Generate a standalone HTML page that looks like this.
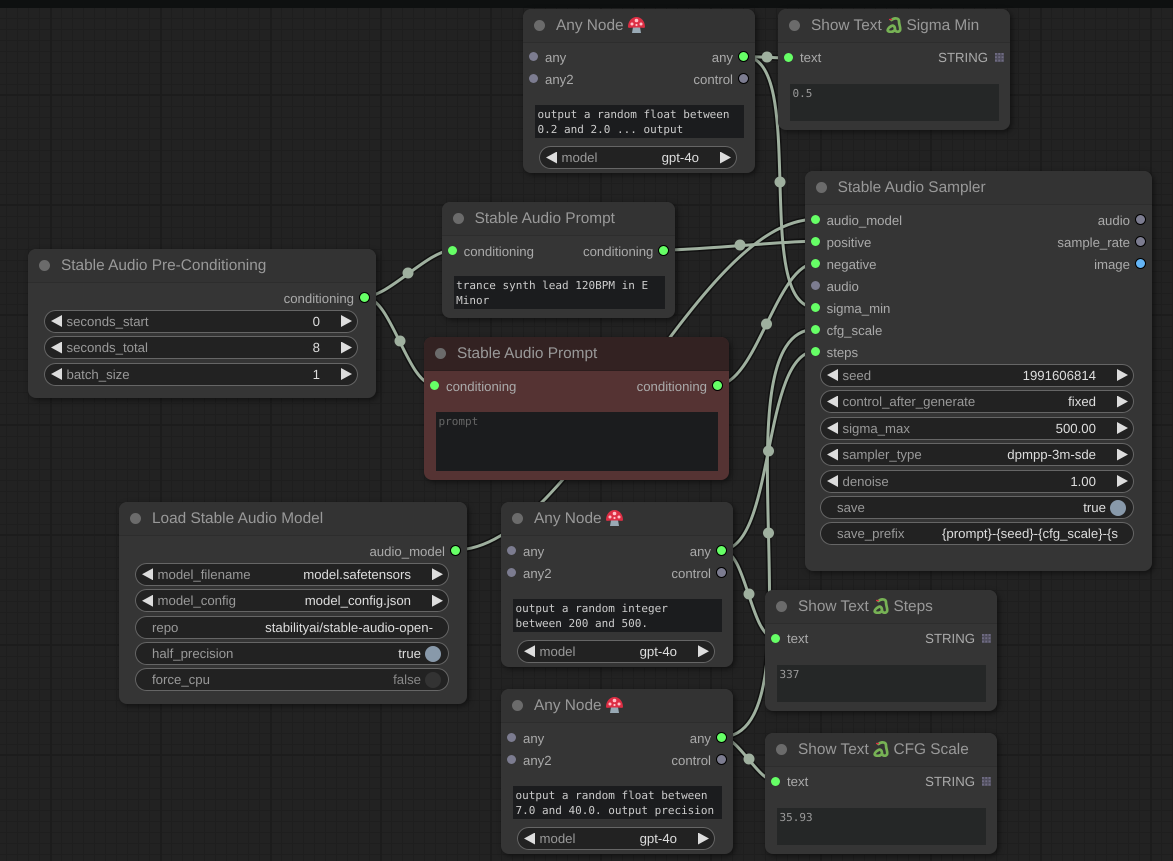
<!DOCTYPE html>
<html><head><meta charset="utf-8"><style>
html,body{margin:0;padding:0;background:#222}
#c{position:relative;width:1173px;height:861px;overflow:hidden;font-family:"Liberation Sans",sans-serif;background-color:#222;text-rendering:geometricPrecision}
#g{position:absolute;inset:0;
background-image:linear-gradient(to right,#1c1c1c 2px,transparent 2px),linear-gradient(to bottom,#1c1c1c 2px,transparent 2px),linear-gradient(to right,#1e1e1e 1px,transparent 1px),linear-gradient(to bottom,#1e1e1e 1px,transparent 1px);
background-size:110px 110px,110px 110px,11px 11px,11px 11px;background-position:50px 0,0 94px,6px 0,0 7px}
#top{position:absolute;left:0;top:0;width:1173px;height:8px;background:#0e1010}
svg.l{position:absolute;left:0;top:0}
.n{position:absolute;background:#353535;border-radius:8px;box-shadow:2px 2px 6px rgba(0,0,0,.5)}
.h{position:absolute;left:0;right:0;top:0;height:33px;background:#333;border-radius:8px 8px 0 0;border-bottom:1px solid #2d2d2d;box-sizing:content-box}
.h i{position:absolute;left:11px;top:11px;width:11px;height:11px;border-radius:50%;background:#6b6b6b}
.h span{position:absolute;left:33px;top:0;line-height:34px;font-size:15.4px;color:#999;white-space:nowrap}
.red{background:#533}
.red .h{background:#322;border-bottom-color:#2c1d1d}
.r{position:absolute;left:0;right:0;height:22px;line-height:23px;font-size:13.2px;color:#aaa;white-space:nowrap}
.r b{position:absolute;width:9px;height:9px;border-radius:50%;top:5.5px}
.r b.L{left:6px}.r b.R{right:7px;box-shadow:0 0 0 1px #000}
.r span.L{position:absolute;left:22px}.r span.R{position:absolute;right:22px}
.r.st{top:38px;line-height:22px}.r.st b{top:6px}
.G{background:#6f6}.S{background:#7c7c90}.B{background:#64b5f6}
.w{position:absolute;left:16px;right:18px;height:23px;background:#222;border-radius:12px;box-shadow:inset 0 0 0 1px #666;font-size:13.2px;line-height:23px;color:#999;white-space:nowrap}
.w.a::before,.w.a::after{content:"";position:absolute;top:5.5px;width:11px;height:12px;background:#ddd}
.w.a::before{left:7px;clip-path:polygon(100% 0,100% 100%,0 50%)}
.w.a::after{right:6px;clip-path:polygon(0 0,0 100%,100% 50%)}
.w .k{position:absolute;left:17px}.w.a .k{left:22.5px}
.w .v{position:absolute;right:16px;color:#ddd}.w.a .v{right:38px}.w.t .v{right:28px}
.w u{position:absolute;right:8px;top:3.5px;width:16px;height:16px;border-radius:50%;background:#89a}
.w.f .v{color:#888}.w.f u{background:#333}
.ta{position:absolute;left:12px;width:209px;height:33px;box-sizing:border-box;background:#1b1c1e;color:#ccc;font:11px/15px "DejaVu Sans Mono",monospace;padding:2px 2.5px;white-space:pre;overflow:hidden}
.sh{background:#252727;color:#999;height:37px}
.gr{position:absolute;right:6px;top:5.5px;width:9px;height:9px;background-color:#6f6c82;background-image:linear-gradient(to right,transparent 2px,#4f4d5c 2px,#4f4d5c 3px),linear-gradient(to bottom,transparent 2px,#4f4d5c 2px,#4f4d5c 3px);background-size:3.3px 3.3px}
svg.e{position:absolute}
</style></head><body><div id="c"><div id="g"></div><div id="top"></div>

<svg class="l" width="1173" height="861" fill="none">
<g stroke="#000" stroke-opacity=".5" stroke-width="6">
<path d="M744 56.5C755 56.5 778 58 789 58"/><path d="M744 56.5C809 56.5 751 307.5 815.7 307.5"/><path d="M364 297C389 297 428 250 453 250"/><path d="M364 297C392 297 407 385.3 435 385.3"/><path d="M664 250C702 250 778 241.3 815.7 241.3"/><path d="M717 385C756 385 777 263.3 815.7 263.3"/><path d="M455 550C577 550 694 219.3 815.7 219.3"/><path d="M721 550C747 550 750 638.5 776 638.5"/><path d="M721 550C776 550 761 351.3 815.7 351.3"/><path d="M721 737C826 737 711 329.3 815.7 329.3"/><path d="M721 737C739 737 758 781.5 776 781.5"/>
</g>
<g stroke="#9fb09f" stroke-width="3">
<path d="M744 56.5C755 56.5 778 58 789 58"/><path d="M744 56.5C809 56.5 751 307.5 815.7 307.5"/><path d="M364 297C389 297 428 250 453 250"/><path d="M364 297C392 297 407 385.3 435 385.3"/><path d="M664 250C702 250 778 241.3 815.7 241.3"/><path d="M717 385C756 385 777 263.3 815.7 263.3"/><path d="M455 550C577 550 694 219.3 815.7 219.3"/><path d="M721 550C747 550 750 638.5 776 638.5"/><path d="M721 550C776 550 761 351.3 815.7 351.3"/><path d="M721 737C826 737 711 329.3 815.7 329.3"/><path d="M721 737C739 737 758 781.5 776 781.5"/>
</g>
<g fill="#9fb09f"><circle cx="767" cy="57" r="5.5"/><circle cx="780" cy="182" r="5.5"/><circle cx="408" cy="273" r="5.5"/><circle cx="400" cy="341" r="5.5"/><circle cx="740" cy="245" r="5.5"/><circle cx="766.500" cy="324" r="5.5"/><circle cx="749" cy="594" r="5.5"/><circle cx="768.500" cy="451" r="5.5"/><circle cx="768.500" cy="533" r="5.5"/><circle cx="749" cy="759" r="5.5"/></g>
</svg>

<!-- Any Node 1 -->
<div class="n" style="left:523px;top:9px;width:232px;height:164px">
<div class="h"><i></i><span>Any Node</span></div>
<svg class="e" style="left:104.500px;top:7.500px" width="17" height="16" viewBox="0 0 17 16"><path d="M5 10h7l1 6H4z" fill="#99aab5"/><path d="M0 10C0 4 4 0 8.500 0S17 4 17 10C17 11.500 14 10.500 8.500 10.500S0 11.500 0 10z" fill="#dd2e44"/><g fill="#ffc0c8"><circle cx="8.500" cy="3.500" r="1.800"/><circle cx="4" cy="7" r="1.500"/><circle cx="13" cy="7" r="1.500"/><circle cx="8.500" cy="8" r="1.100"/></g></svg>
<div class="r" style="top:37.200px"><b class="L S"></b><span class="L">any</span><b class="R G"></b><span class="R">any</span></div>
<div class="r" style="top:59.200px"><b class="L S"></b><span class="L">any2</span><b class="R S"></b><span class="R">control</span></div>
<div class="ta" style="top:96px">output a random float between
0.2 and 2.0 ... output</div>
<div class="w a" style="top:137px"><span class="k">model</span><span class="v">gpt-4o</span></div>
</div>

<!-- Show Text Sigma Min -->
<div class="n" style="left:778px;top:9px;width:232px;height:121px">
<div class="h"><i></i><span>Show Text</span><span style="left:128.500px">Sigma Min</span></div>
<svg class="e" style="left:108px;top:8px" width="16" height="16" viewBox="0 0 16 16" fill="none"><path d="M5.500 3C8 .8 13 .5 13 4.500 13 8 15 11 14 13.500 12.500 15.500 9.500 15 9 12.500 9 9.500 7.500 8 5.500 9 2.500 10.500 1 13 2 14 4 15.500 8 15 9 12.500" stroke="#77b255" stroke-width="2.700" stroke-linecap="round"/><path d="M3 2.500h3" stroke="#dd2e44" stroke-width="1.300"/></svg>
<div class="r st"><b class="L G"></b><span class="L">text</span><span class="R">STRING</span><em class="gr"></em></div>
<div class="ta sh" style="top:75px">0.5</div>
</div>

<!-- Sampler -->
<div class="n" style="left:804.600px;top:171px;width:347.400px;height:400px">
<div class="h"><i></i><span>Stable Audio Sampler</span></div>
<div class="r" style="top:38px"><b class="L G"></b><span class="L">audio_model</span><b class="R S"></b><span class="R">audio</span></div>
<div class="r" style="top:60px"><b class="L G"></b><span class="L">positive</span><b class="R S"></b><span class="R">sample_rate</span></div>
<div class="r" style="top:82px"><b class="L G"></b><span class="L">negative</span><b class="R B"></b><span class="R">image</span></div>
<div class="r" style="top:104px"><b class="L S"></b><span class="L">audio</span></div>
<div class="r" style="top:126px"><b class="L G"></b><span class="L">sigma_min</span></div>
<div class="r" style="top:148px"><b class="L G"></b><span class="L">cfg_scale</span></div>
<div class="r" style="top:170px"><b class="L G"></b><span class="L">steps</span></div>
<div class="w a" style="left:15.400px;top:192.500px"><span class="k">seed</span><span class="v">1991606814</span></div>
<div class="w a" style="left:15.400px;top:219px"><span class="k">control_after_generate</span><span class="v">fixed</span></div>
<div class="w a" style="left:15.400px;top:245.500px"><span class="k">sigma_max</span><span class="v">500.00</span></div>
<div class="w a" style="left:15.400px;top:272px"><span class="k">sampler_type</span><span class="v">dpmpp-3m-sde</span></div>
<div class="w a" style="left:15.400px;top:298.500px"><span class="k">denoise</span><span class="v">1.00</span></div>
<div class="w t" style="left:15.400px;top:325px"><span class="k">save</span><span class="v">true</span><u></u></div>
<div class="w" style="left:15.400px;top:351px"><span class="k">save_prefix</span><span class="v">{prompt}-{seed}-{cfg_scale}-{s</span></div>
</div>

<!-- Prompt 1 -->
<div class="n" style="left:441.600px;top:202px;width:233.800px;height:116px">
<div class="h"><i></i><span>Stable Audio Prompt</span></div>
<div class="r" style="top:38px"><b class="L G"></b><span class="L">conditioning</span><b class="R G"></b><span class="R">conditioning</span></div>
<div class="ta" style="top:74px;width:211px">trance synth lead 120BPM in E
Minor</div>
</div>

<!-- Prompt 2 -->
<div class="n red" style="left:424px;top:337px;width:305px;height:143px">
<div class="h"><i></i><span>Stable Audio Prompt</span></div>
<div class="r" style="top:38px"><b class="L G"></b><span class="L">conditioning</span><b class="R G"></b><span class="R">conditioning</span></div>
<div class="ta" style="top:75px;width:282px;height:59px;color:#666">prompt</div>
</div>

<!-- Pre-Conditioning -->
<div class="n" style="left:28px;top:249px;width:348px;height:149px">
<div class="h"><i></i><span>Stable Audio Pre-Conditioning</span></div>
<div class="r" style="top:38px"><b class="R G"></b><span class="R">conditioning</span></div>
<div class="w a" style="top:60.500px"><span class="k">seconds_start</span><span class="v">0</span></div>
<div class="w a" style="top:87px"><span class="k">seconds_total</span><span class="v">8</span></div>
<div class="w a" style="top:113.500px"><span class="k">batch_size</span><span class="v">1</span></div>
</div>

<!-- Load -->
<div class="n" style="left:119px;top:502px;width:348px;height:202px">
<div class="h"><i></i><span>Load Stable Audio Model</span></div>
<div class="r" style="top:38px"><b class="R G"></b><span class="R">audio_model</span></div>
<div class="w a" style="top:60.800px"><span class="k">model_filename</span><span class="v">model.safetensors</span></div>
<div class="w a" style="top:87.200px"><span class="k">model_config</span><span class="v">model_config.json</span></div>
<div class="w" style="top:113.600px"><span class="k">repo</span><span class="v">stabilityai/stable-audio-open-</span></div>
<div class="w t" style="top:140px"><span class="k">half_precision</span><span class="v">true</span><u></u></div>
<div class="w t f" style="top:166.400px"><span class="k">force_cpu</span><span class="v">false</span><u></u></div>
</div>

<!-- Any Node 2 -->
<div class="n" style="left:501px;top:502px;width:232px;height:165px">
<div class="h"><i></i><span>Any Node</span></div>
<svg class="e" style="left:104.500px;top:7.500px" width="17" height="16" viewBox="0 0 17 16"><path d="M5 10h7l1 6H4z" fill="#99aab5"/><path d="M0 10C0 4 4 0 8.500 0S17 4 17 10C17 11.500 14 10.500 8.500 10.500S0 11.500 0 10z" fill="#dd2e44"/><g fill="#ffc0c8"><circle cx="8.500" cy="3.500" r="1.800"/><circle cx="4" cy="7" r="1.500"/><circle cx="13" cy="7" r="1.500"/><circle cx="8.500" cy="8" r="1.100"/></g></svg>
<div class="r" style="top:38px"><b class="L S"></b><span class="L">any</span><b class="R G"></b><span class="R">any</span></div>
<div class="r" style="top:60px"><b class="L S"></b><span class="L">any2</span><b class="R S"></b><span class="R">control</span></div>
<div class="ta" style="top:97px">output a random integer
between 200 and 500.</div>
<div class="w a" style="top:137.700px"><span class="k">model</span><span class="v">gpt-4o</span></div>
</div>

<!-- Any Node 3 -->
<div class="n" style="left:501px;top:689px;width:232px;height:165px">
<div class="h"><i></i><span>Any Node</span></div>
<svg class="e" style="left:104.500px;top:7.500px" width="17" height="16" viewBox="0 0 17 16"><path d="M5 10h7l1 6H4z" fill="#99aab5"/><path d="M0 10C0 4 4 0 8.500 0S17 4 17 10C17 11.500 14 10.500 8.500 10.500S0 11.500 0 10z" fill="#dd2e44"/><g fill="#ffc0c8"><circle cx="8.500" cy="3.500" r="1.800"/><circle cx="4" cy="7" r="1.500"/><circle cx="13" cy="7" r="1.500"/><circle cx="8.500" cy="8" r="1.100"/></g></svg>
<div class="r" style="top:38px"><b class="L S"></b><span class="L">any</span><b class="R G"></b><span class="R">any</span></div>
<div class="r" style="top:60px"><b class="L S"></b><span class="L">any2</span><b class="R S"></b><span class="R">control</span></div>
<div class="ta" style="top:97px">output a random float between
7.0 and 40.0. output precision</div>
<div class="w a" style="top:138px"><span class="k">model</span><span class="v">gpt-4o</span></div>
</div>

<!-- Show Text Steps -->
<div class="n" style="left:765px;top:590px;width:232px;height:121px">
<div class="h"><i></i><span>Show Text</span><span style="left:128.500px">Steps</span></div>
<svg class="e" style="left:108px;top:8px" width="16" height="16" viewBox="0 0 16 16" fill="none"><path d="M5.500 3C8 .8 13 .5 13 4.500 13 8 15 11 14 13.500 12.500 15.500 9.500 15 9 12.500 9 9.500 7.500 8 5.500 9 2.500 10.500 1 13 2 14 4 15.500 8 15 9 12.500" stroke="#77b255" stroke-width="2.700" stroke-linecap="round"/><path d="M3 2.500h3" stroke="#dd2e44" stroke-width="1.300"/></svg>
<div class="r st"><b class="L G"></b><span class="L">text</span><span class="R">STRING</span><em class="gr"></em></div>
<div class="ta sh" style="top:75px">337</div>
</div>

<!-- Show Text CFG -->
<div class="n" style="left:765px;top:733px;width:232px;height:121px">
<div class="h"><i></i><span>Show Text</span><span style="left:128.500px">CFG Scale</span></div>
<svg class="e" style="left:108px;top:8px" width="16" height="16" viewBox="0 0 16 16" fill="none"><path d="M5.500 3C8 .8 13 .5 13 4.500 13 8 15 11 14 13.500 12.500 15.500 9.500 15 9 12.500 9 9.500 7.500 8 5.500 9 2.500 10.500 1 13 2 14 4 15.500 8 15 9 12.500" stroke="#77b255" stroke-width="2.700" stroke-linecap="round"/><path d="M3 2.500h3" stroke="#dd2e44" stroke-width="1.300"/></svg>
<div class="r st"><b class="L G"></b><span class="L">text</span><span class="R">STRING</span><em class="gr"></em></div>
<div class="ta sh" style="top:75px">35.93</div>
</div>

</div></body></html>
